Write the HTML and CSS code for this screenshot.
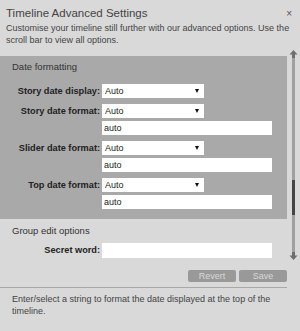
FILE: index.html
```html
<!DOCTYPE html>
<html lang="en">
<head>
  <meta charset="UTF-8" />
  <title>Timeline Advanced Settings</title>
  <link rel="stylesheet" href="styles.css">
</head>
<body>
  <div class="dialog">
    <div class="head">
      <div class="title-row">
        <h1>Timeline Advanced Settings</h1>
        <span class="close">&times;</span>
      </div>
      <p class="intro">Customise your timeline still further with our advanced options. Use the scroll bar to view all options.</p>
    </div>

    <div class="scroll-wrap">
      <div class="scroll-content">
        <!-- Date formatting -->
        <div class="panel panel-dark">
          <h2>Date formatting</h2>
          <div class="field">
            <label>Story date display:</label>
            <div class="controls">
              <div class="select"><span>Auto</span><i class="caret"></i></div>
            </div>
          </div>
          <div class="field">
            <label>Story date format:</label>
            <div class="controls">
              <div class="select"><span>Auto</span><i class="caret"></i></div>
              <input type="text" class="text" value="auto" />
            </div>
          </div>
          <div class="field">
            <label>Slider date format:</label>
            <div class="controls">
              <div class="select"><span>Auto</span><i class="caret"></i></div>
              <input type="text" class="text" value="auto" />
            </div>
          </div>
          <div class="field">
            <label>Top date format:</label>
            <div class="controls">
              <div class="select"><span>Auto</span><i class="caret"></i></div>
              <input type="text" class="text" value="auto" />
            </div>
          </div>
        </div>

        <!-- Group edit -->
        <div class="panel panel-light">
          <h2>Group edit options</h2>
          <div class="field">
            <label>Secret word:</label>
            <div class="controls">
              <input type="text" class="text" value="" />
            </div>
          </div>
        </div>

        <div class="actions">
          <button class="btn">Revert</button>
          <button class="btn">Save</button>
        </div>
      </div>

      <!-- custom scroll bar -->
      <div class="scrollbar">
        <svg class="arrow" width="9" height="8" viewBox="0 0 9 8"><path d="M4.5 0 L8.5 4.5 L6 4.5 L6 8 L3 8 L3 4.5 L0.5 4.5 Z" fill="#6e6e6e"/></svg>
        <div class="track"><div class="thumb"></div></div>
        <svg class="arrow" width="9" height="8" viewBox="0 0 9 8"><path d="M4.5 8 L8.5 3.5 L6 3.5 L6 0 L3 0 L3 3.5 L0.5 3.5 Z" fill="#6e6e6e"/></svg>
      </div>
    </div>

    <p class="help">Enter/select a string to format the date displayed at the top of the timeline.</p>
  </div>
</body>
</html>
```

FILE: styles.css
```css
* {
  margin: 0;
  padding: 0;
  box-sizing: border-box;
}
body {
  font-family: 'Liberation Sans', Arial, sans-serif;
  background: #d9d9d9;
  color: #444;
  width: 300px;
  height: 331px;
  overflow: hidden;
}
/* Header */
.head {
  padding: 6px 6px 0 6px;
  height: 48px;
}
.title-row {
  display: flex;
  justify-content: space-between;
  align-items: flex-start;
}
h1 {
  font-size: 11.5px;
  font-weight: normal;
  line-height: 15px;
  color: #444;
}
.close {
  font-size: 10px;
  line-height: 10px;
  color: #555;
  margin: 3px 2px 0 0;
}
.intro {
  font-size: 9px;
  line-height: 12px;
  margin-top: 1px;
}
/* Scroll area */
.scroll-wrap {
  display: flex;
  align-items: flex-start;
}
.scroll-content {
  width: 287px;
  padding-top: 8px;
  padding-bottom: 5px;
  border-bottom: 1px solid #a8a8a8;
}
.panel {
  padding: 5px 0 10px 12px;
}
.panel-dark {
  background: #a9a9a9;
}
.panel-light {
  padding-top: 6px;
  padding-bottom: 0;
}
h2 {
  font-size: 9.5px;
  font-weight: normal;
  line-height: 12px;
  color: #333;
  margin-bottom: 11px;
}
.panel-light h2 {
  margin-bottom: 6px;
}
.field {
  display: flex;
  align-items: flex-start;
  margin-bottom: 6px;
}
.field:last-child {
  margin-bottom: 0;
}
.field label {
  width: 90px;
  text-align: right;
  font-size: 9.2px;
  font-weight: bold;
  line-height: 14px;
  color: #222;
  padding-right: 2px;
}
.controls {
  display: flex;
  flex-direction: column;
  gap: 3px;
}
.select {
  width: 102px;
  height: 14px;
  background: #fff;
  display: flex;
  align-items: center;
  justify-content: space-between;
  padding: 0 5px 0 3px;
  font-size: 9px;
  color: #222;
}
.caret {
  width: 0;
  height: 0;
  border-left: 2.5px solid transparent;
  border-right: 2.5px solid transparent;
  border-top: 4px solid #111;
}
.text {
  width: 170px;
  height: 14px;
  border: none;
  outline: none;
  background: #fff;
  font-family: inherit;
  font-size: 9px;
  color: #222;
  padding: 0 2px;
}
.panel-light .text {
  height: 15px;
}
/* Buttons */
.actions {
  display: flex;
  justify-content: flex-end;
  gap: 3px;
  margin-top: 12px;
}
.btn {
  width: 48px;
  height: 12px;
  background: #999;
  border: none;
  border-radius: 2px;
  color: #d8d8d8;
  font-family: inherit;
  font-size: 9px;
  line-height: 12px;
}
/* Scroll bar */
.scrollbar {
  width: 13px;
  height: 210px;
  margin-top: 2px;
  display: flex;
  flex-direction: column;
  align-items: center;
}
.track {
  flex: 1;
  width: 3px;
  background: #a0a0a0;
  padding-top: 122px;
}
.thumb {
  height: 35px;
  background: #444;
}
/* Help */
.help {
  font-size: 9px;
  line-height: 12px;
  padding: 5px 12px 0 12px;
}
```
